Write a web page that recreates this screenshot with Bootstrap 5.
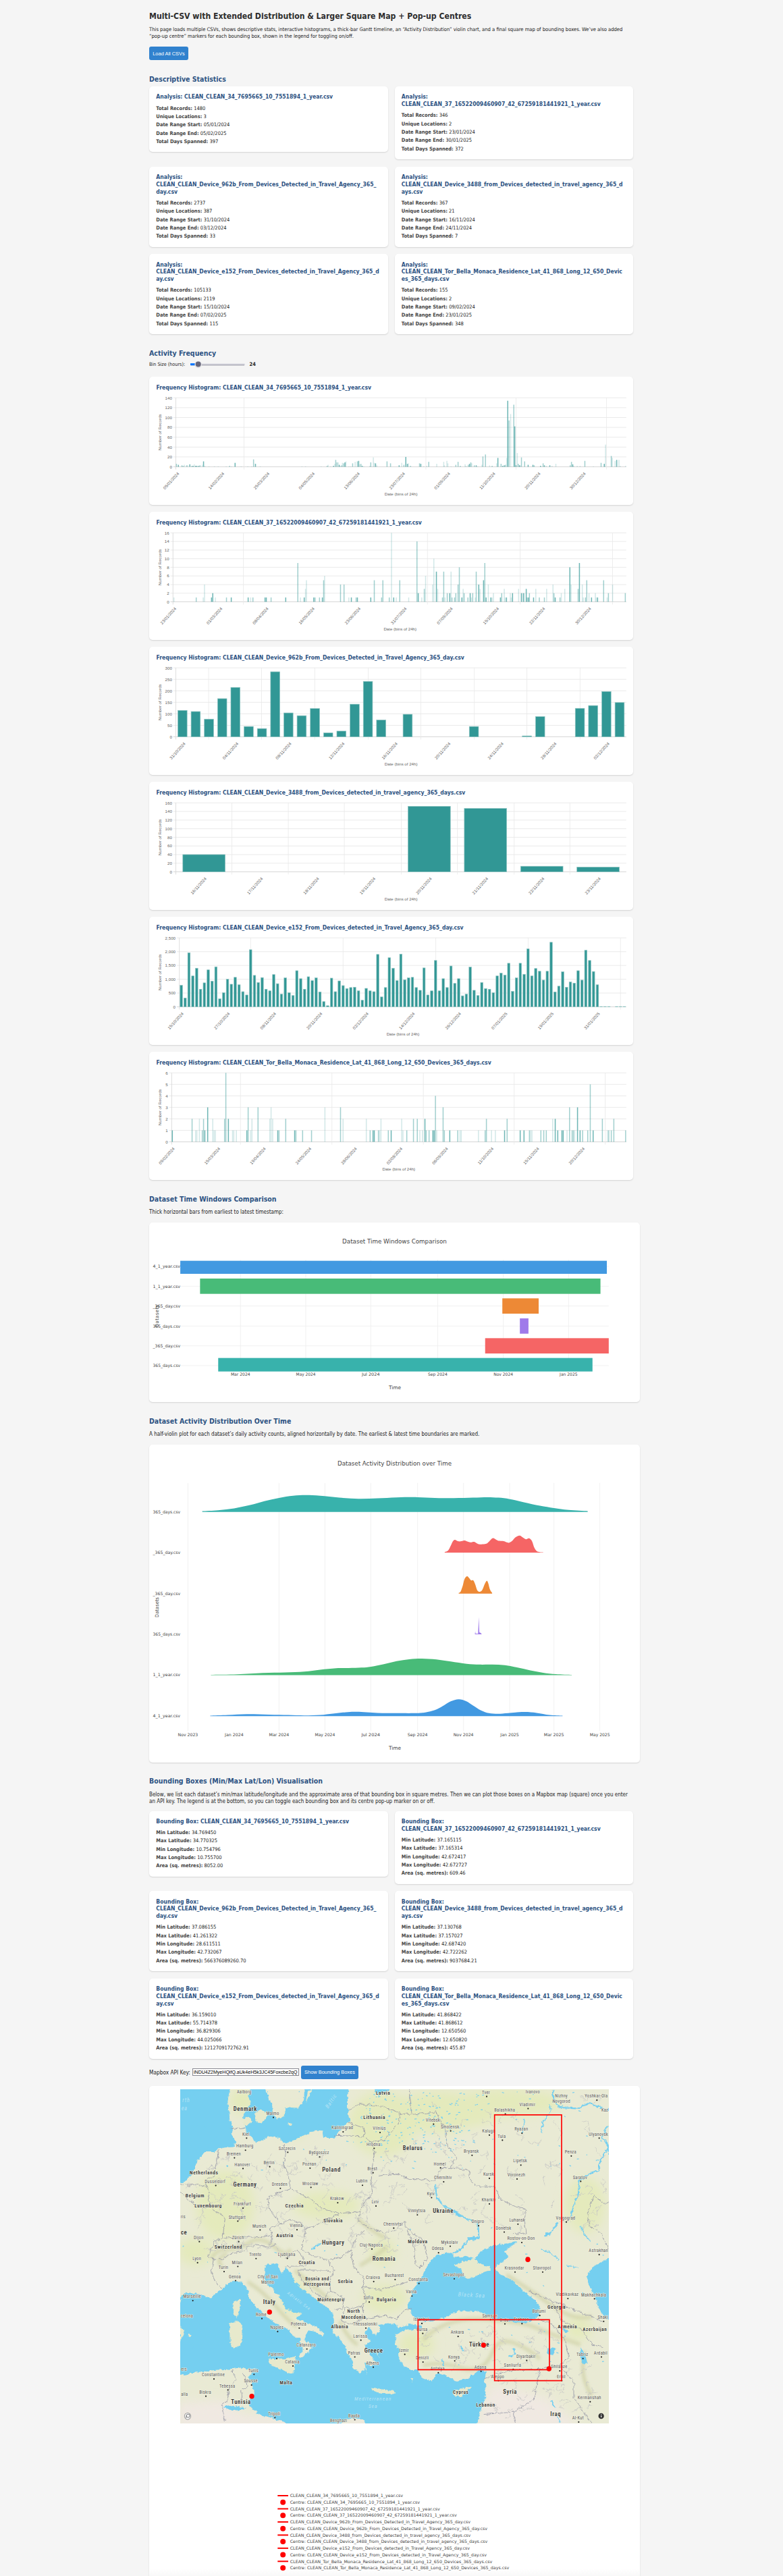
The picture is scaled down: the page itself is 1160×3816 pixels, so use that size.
<!DOCTYPE html>
<html lang="en">
<head>
<meta charset="utf-8">
<meta name="viewport" content="width=device-width, initial-scale=1">
<title>Multi-CSV with Extended Distribution</title>
<link rel="stylesheet" href="https://cdn.jsdelivr.net/npm/bootstrap@5.3.0/dist/css/bootstrap.min.css">
<style>
body{background:#f5f5f5;color:#222;font-family:"DejaVu Sans Condensed","DejaVu Sans",sans-serif;font-stretch:condensed;font-size:7.48px;line-height:10.3px;height:3816px;overflow:hidden}
.page{width:717px;margin-left:221px}
h1{font-size:12.16px;line-height:16px;font-weight:700;color:#2d2d2d;padding-top:16px;margin:0 0 7px}
h2{font-size:10.5px;line-height:14px;font-weight:700;color:#2c5282;margin:0;white-space:nowrap}
h3{font-size:8.55px;line-height:10.8px;font-weight:700;color:#2c5282;margin:0 0 6.5px;overflow-wrap:anywhere}
p{margin:0;white-space:nowrap;font-size:8px}
.intro{font-size:7.58px}
.panel{background:#fff;border-radius:5px;box-shadow:0 1px 2px rgba(0,0,0,.14)}
.stat{padding:10.3px;width:353.5px}
.stat ul{margin:0;padding:0;list-style:none}
.stat li{height:10.3px;margin-bottom:2px;white-space:nowrap}
.stat li:last-child{margin:0}
.stat b{color:#444}
.grid2{display:grid;grid-template-columns:353.5px 353.5px;column-gap:10px;row-gap:10.5px;align-items:start}
.cta{background:#3182ce;border:0;color:#fff;border-radius:3px;font:7.45px "Liberation Sans",Arial,sans-serif;white-space:nowrap;height:20px;padding:0;text-align:center}
.hist{height:190px;margin-bottom:10px;position:relative;padding-top:10.3px}
.hist h3{padding-left:10.5px;margin:0;white-space:nowrap}
.hist svg{position:absolute;left:0;top:0}
.slider{width:82px;height:12px}
.bin-label{width:60.5px;font-size:7.2px}
.key-label{width:64px;font-size:8.25px;white-space:nowrap}
.key{width:158px;height:11.5px;border:1px solid #8a8a92;background:#fff;font:7.05px "Liberation Sans",Arial,sans-serif;line-height:10px;overflow:hidden;white-space:nowrap;color:#000;padding-left:1px}
svg{display:block}
.wide{width:727px}
.map-card{height:740px;margin-top:10px;padding:5px 0 0 46px;background:linear-gradient(#fff 0 715px,#f3f3f3 735px)}
.tick{font:6.2px "Liberation Sans",Arial,sans-serif;fill:#666}
.pl{font-family:"DejaVu Sans",sans-serif;fill:#444}
.mapbox text{font-family:Roboto,"Open Sans",sans-serif;text-anchor:middle;paint-order:stroke;stroke:#f3f3e6;stroke-width:3px;stroke-linejoin:round;fill:#555;letter-spacing:.9px}
.mapbox .land-name{font-weight:600;fill:#333;letter-spacing:1.9px}
.mapbox .sea{fill:#b6e4f6;stroke:none;font-style:italic;letter-spacing:3px}
</style>
<script src="https://cdn.jsdelivr.net/npm/bootstrap@5.3.0/dist/js/bootstrap.bundle.min.js"></script>
</head>
<body>
<main class="page">
<h1>Multi-CSV with Extended Distribution &amp; Larger Square Map + Pop-up Centres</h1>
<p class="intro">This page loads multiple CSVs, shows descriptive stats, interactive histograms, a thick-bar Gantt timeline, an “Activity Distribution” violin chart, and a final square map of bounding boxes. We’ve also added<br>“pop-up centre” markers for each bounding box, shown in the legend for toggling on/off.</p>
<button class="cta d-block" style="width:58px;margin-top:9.5px">Load All CSVs</button>
<h2 style="margin-top:20.5px;margin-bottom:4.5px">Descriptive Statistics</h2>
<section class="grid2" id="stats"></section>
<h2 style="margin-top:21px">Activity Frequency</h2>
<div class="d-flex align-items-center" style="height:20px;margin-bottom:8px"><span class="bin-label">Bin Size (hours):</span>
<svg class="slider" viewBox="0 0 82 12"><rect y="4.2" width="81" height="3" rx="1.5" fill="#dedee5"/><path d="M1 6.8H80" stroke="#8f8f9d" stroke-width="1"/><rect y="4.2" width="8" height="3" fill="#0075ff"/><circle cx="11.7" cy="6" r="5.3" fill="#e3e3e6"/><circle cx="11.7" cy="5.5" r="4" fill="#66667a"/></svg><b style="margin-left:6px">24</b></div>
<section id="hists"></section>
<h2 style="margin-top:20.5px;margin-bottom:8px">Dataset Time Windows Comparison</h2>
<p>Thick horizontal bars from earliest to latest timestamp:</p>
<div class="panel wide" id="gantt" style="height:266.5px;margin-top:9.7px"></div>
<h2 style="margin-top:20.5px;margin-bottom:8px">Dataset Activity Distribution Over Time</h2>
<p>A half-violin plot for each dataset’s daily activity counts, aligned horizontally by date. The earliest &amp; latest time boundaries are marked.</p>
<div class="panel wide" id="violin" style="height:471px;margin-top:9.7px"></div>
<h2 style="margin-top:20.8px;margin-bottom:8.5px">Bounding Boxes (Min/Max Lat/Lon) Visualisation</h2>
<p>Below, we list each dataset’s min/max latitude/longitude and the approximate area of that bounding box in square metres. Then we can plot those boxes on a Mapbox map (square) once you enter<br>an API key. The legend is at the bottom, so you can toggle each bounding box and its centre pop-up marker on or off.</p>
<section class="grid2" id="boxes" style="margin-top:8px"></section>
<div class="d-flex align-items-center" style="margin-top:10px;height:20px"><span class="key-label">Mapbox API Key:</span><div class="key">iNDU4Z2MyeHQifQ.aUk4eH5k3JC45Foxcbe2qQ</div><button class="cta" style="width:85px;margin-left:3px">Show Bounding Boxes</button></div>
<div class="panel wide map-card">
<svg class="mapbox" id="map" width="635" height="495" viewBox="51 102 1905 1437" preserveAspectRatio="none"></svg>
<svg id="legend" width="620" height="224"></svg>
</div>
</main>
<script>
const names=['CLEAN_CLEAN_34_7695665_10_7551894_1_year.csv','CLEAN_CLEAN_37_16522009460907_42_67259181441921_1_year.csv','CLEAN_CLEAN_Device_962b_From_Devices_Detected_in_Travel_Agency_365_day.csv','CLEAN_CLEAN_Device_3488_from_Devices_detected_in_travel_agency_365_days.csv','CLEAN_CLEAN_Device_e152_From_Devices_detected_in_Travel_Agency_365_day.csv','CLEAN_CLEAN_Tor_Bella_Monaca_Residence_Lat_41_868_Long_12_650_Devices_365_days.csv'];
const broken=[0,0,'365_|day','365_d|ays','365_d|ay','Devic|es'];
const cards=(id,title,labels,rows)=>document.getElementById(id).innerHTML=rows.map((r,i)=>{
 let n=names[i];if(broken[i])n=n.replace(broken[i].replace('|',''),broken[i].replace('|','<br>'));
 return `<div class="panel stat"><h3>${title}:${i?'<br>':' '}${n}</h3><ul>${r.map((v,k)=>`<li><b>${labels[k]}:</b> ${v}</li>`).join('')}</ul></div>`}).join('');
cards('stats','Analysis',['Total Records','Unique Locations','Date Range Start','Date Range End','Total Days Spanned'],[
['1480','3','05/01/2024','05/02/2025','397'],['346','2','23/01/2024','30/01/2025','372'],['2737','387','31/10/2024','03/12/2024','33'],['367','21','16/11/2024','24/11/2024','7'],['105133','2119','15/10/2024','07/02/2025','115'],['155','2','09/02/2024','23/01/2025','348']]);
cards('boxes','Bounding Box',['Min Latitude','Max Latitude','Min Longitude','Max Longitude','Area (sq. metres)'],[
['34.769450','34.770325','10.754796','10.755700','8052.00'],['37.165115','37.165314','42.672417','42.672727','609.46'],['37.086155','41.261322','28.611511','42.732067','566376089260.70'],['37.130768','37.157027','42.687420','42.722262','9037684.21'],['36.159010','55.714378','36.829306','44.025066','1212709172762.91'],['41.868422','41.868612','12.650560','12.650820','455.87']]);

const X=v=>+(v/2.119-11).toFixed(2);
const tones=['','rgba(49,151,149,.22)','rgba(49,151,149,.45)','rgba(49,151,149,.7)'];
const T=31.3,B=133.5;
const slots=(l,r,w,vals)=>{const s=(r-l)/vals.length;return vals.map((v,i)=>[l+s*(i+.5),v,3,w]).filter(b=>b[1])};
const parse=s=>s.trim().split(/\s+/).map(t=>{const a=t.split(',').map(Number);return[a[0],a[1],a[2]||1,3.2]});
function hist(i,o){
 let s='';const y=v=>B-(B-T)*v/o.max;
 for(let v=0;v<=o.max;v+=o.step){s+=`<path d="M${X(o.l-8)} ${y(v)}H${X(1521)}" stroke="${v?'#e8e8e8':'#d2d2d2'}" stroke-width=".9"/><text class="tick" text-anchor="end" x="${X(o.l-12)}" y="${y(v)+2.2}">${v.toLocaleString('en-US')}</text>`}
 o.grid.forEach((g,k)=>s+=`<path d="M${X(g)} ${T}V${B+4}" stroke="${k?'#e9e9e9':'#d5d5d5'}" stroke-width=".8"/>`);
 o.bars.forEach(([x,v,t,w])=>{const yy=y(v),solid=w>5;s+=`<rect x="${X(x-w/2)}" y="${yy.toFixed(2)}" width="${(w/2.119).toFixed(2)}" height="${(B-yy).toFixed(2)}" fill="${solid?'#319795':tones[t]}" ${solid?'stroke="#8fc4c2" stroke-width=".7"':''}/>`});
 o.dates.forEach((d,k)=>{const x=X(o.d0+o.dp*k);s+=`<text class="tick" text-anchor="end" transform="translate(${x},144) rotate(-48)" textLength="31.5">${d}</text>`});
 s+=`<text class="tick" text-anchor="middle" x="${X(o.mid||814)}" y="175.5" textLength="48.6">Date (bins of 24h)</text><text class="tick" text-anchor="middle" transform="translate(18.2,82.3) rotate(-90)" textLength="54">Number of Records</text>`;
 return `<div class="panel hist"><h3>Frequency Histogram: ${names[i]}</h3><svg width="717" height="190">${s}</svg></div>`}
const D=s=>s.split(' ');
const charts=[
{l:107,max:140,step:20,grid:[107,321,892,1175,1459],d0:118,dp:141.8,dates:D('05/01/2024 14/02/2024 25/03/2024 04/05/2024 13/06/2024 23/07/2024 01/09/2024 11/10/2024 20/11/2024 30/12/2024'),
bars:parse(`109,6,2 115,4,3 126,3,2 130,2,2 134,4 141,3,2 144,3 151,5,3 157,2,2 161,2,3 165,5 169,2,3 173,2,3 179,2,3 183,3,2 190,4 194,11,3 198,2 211,1 228,1 240,1 265,1 276,2,2 282,1 293,8,3 312,1 333,1 345,1 351,15,2 357,6,3 372,1 503,1 514,1 563,1 582,2,2 585,4 593,1 602,2,3 606,6 609,14,2 613,9,2 617,9 620,4,3 624,2 628,3,2 630,8 634,7,2 638,9,3 641,11 650,1 656,1 662,7,2 670,10 677,11,2 681,12,3 684,5 688,6,2 692,2,3 697,1 716,2 719,9,2 727,19 730,8 734,7,3 738,3 770,11,2 781,7,2 808,3,3 816,8 823,4,2 829,20,3 834,6,3 837,7 844,2,2 872,7,2 876,6,3 885,1 894,2 901,10,2 926,6 948,10 950,3 958,12 961,7 971,1 986,4,2 993,10,2 1000,2,2 1015,5 1018,2 1025,4,2 1029,6,3 1033,9,2 1036,7 1044,3,2 1050,3,3 1055,1 1068,4 1071,21,2 1079,25,2 1092,3 1100,2,2 1114,7 1118,18,3 1128,6,2 1133,2,3 1138,3,3 1142,4,2 1146,18 1149,134,3 1153,94,2 1158,107 1168,126,2 1171,82,3 1175,3,3 1179,28 1182,6,2 1186,3,3 1188,3 1192,19,2 1202,11,2 1213,4,3 1228,4,3 1232,3,2 1252,2,3 1260,7,2 1264,3,3 1270,2 1281,3,3 1288,2 1300,6 1345,3,2 1349,10,2 1353,5,3 1356,2 1367,2 1376,2 1391,12,2 1418,1 1442,8,2 1452,6,3 1456,45,1 1474,22,2 1477,18 1486,12 1491,14,3 1498,14 1502,2 1519,2`)},
{l:98,max:16,step:2,mid:811,grid:[98,319,897,1188,1478],d0:109,dp:144.7,dates:D('23/01/2024 01/03/2024 08/04/2024 16/05/2024 23/06/2024 31/07/2024 07/09/2024 15/10/2024 22/11/2024 30/12/2024'),
bars:parse(`101,1 171,1,2 193,1 197,4 219,1,3 223,2,3 231,1 266,1,2 281,1,3 334,1,3 342,1 349,1,2 387,1,3 391,1,3 406,1,2 452,1,3 490,9,2 498,1 510,1,3 514,3 517,5 540,1,3 544,1,2 558,1,2 567,1,3 571,5,2 574,6,1 624,4,2 635,4,2 650,1 658,1,3 673,1,2 677,1,3 719,1,3 730,5,2 753,1,2 757,5,2 777,1,2 784,16 791,1,3 799,1 810,5,2 838,1 864,14,2 868,2,3 879,1 887,3,2 891,6 913,4 917,10 925,7,3 929,3 944,1,2 948,7,2 952,1 959,2,2 967,2,3 971,7 974,1,2 982,1,2 986,2,2 993,4,2 997,8,2 1005,1,3 1009,3 1012,2,2 1024,1,2 1031,2,3 1035,1 1039,2,2 1047,1 1050,7,2 1058,4,3 1062,3 1073,5,3 1077,9,2 1081,1,3 1088,4 1096,1,3 1100,1 1104,2 1126,1,3 1130,2,2 1138,3 1141,1 1145,1,3 1157,2 1160,1 1164,2,3 1183,3 1192,2,3 1196,2 1199,2,3 1207,3,3 1210,1,2 1214,1,3 1217,2,2 1230,1,3 1237,3 1248,1,2 1264,1,2 1271,3 1291,4 1294,2,2 1298,1,3 1313,1,2 1317,2 1328,3 1344,8,3 1348,4 1370,3,2 1374,9,3 1383,4 1386,1 1393,1,2 1397,5,2 1404,2 1412,1,3 1424,2 1427,1 1431,1,3 1450,5,2 1461,1 1465,2,2 1478,4 1518,2,2`)},
{l:107,max:300,step:50,grid:[107,210,376,543,711,876,1044,1209,1376],d0:138,dp:166.4,dates:D('31/10/2024 04/11/2024 08/11/2024 12/11/2024 16/11/2024 20/11/2024 24/11/2024 28/11/2024 02/12/2024'),
bars:slots(107,1521,29,[115,110,77,166,215,45,36,283,104,92,123,17,25,142,241,73,0,98,0,0,0,0,45,0,0,0,4,88,0,0,124,136,197,149])},
{l:107,max:160,step:20,grid:[107,283,460,636,815,991,1169,1344],d0:204,dp:176.8,dates:D('16/11/2024 17/11/2024 18/11/2024 19/11/2024 20/11/2024 21/11/2024 22/11/2024 23/11/2024'),
bars:slots(107,1521,133,[40,0,0,0,152,147,13,11])},
{l:118,max:2500,step:500,mid:820,grid:[118,342,632,923,1213,1503],d0:132,dp:145.2,dates:D('15/10/2024 27/10/2024 08/11/2024 20/11/2024 02/12/2024 14/12/2024 26/12/2024 07/01/2025 19/01/2025 31/01/2025'),
bars:slots(118,1521,7.6,[780,320,1960,1120,1400,640,870,1340,930,1450,290,510,1000,820,1070,800,550,430,2070,1140,880,1060,640,580,1170,840,460,1050,510,410,1310,1020,640,1090,950,1050,540,190,40,1040,550,940,770,660,700,710,580,240,670,580,550,1900,360,700,1780,1400,950,1910,980,1050,1070,700,600,1410,430,580,1680,580,1020,700,1480,850,1020,400,460,1440,600,410,880,660,640,510,1120,1220,1150,1580,560,1050,1580,1180,2100,1120,1390,1290,970,1290,2340,540,750,1270,710,900,860,1310,970,2050,1680,1280,800,10,10,10,0,10,10,10])},
{l:94,max:6,step:1,mid:807,grid:[94,310,597,884,1169,1455],d0:104,dp:143,dates:D('09/02/2024 15/03/2024 19/04/2024 24/05/2024 28/06/2024 02/08/2024 06/09/2024 11/10/2024 15/11/2024 20/12/2024'),
bars:parse(`96,1,3 158,2,2 169,1 173,1 181,2 190,1,2 194,2,2 198,1,3 207,3,3 223,2 227,1 231,1 260,2,2 264,6,2 272,2,3 285,1 289,1 297,1 330,1,3 334,3,2 342,1 346,2 365,3,2 402,2 406,3 411,2 427,1,3 431,1,2 452,2,2 480,1,3 484,1,2 505,1,2 533,1,2 575,3 624,3,2 632,2 705,2,1 717,1,2 726,1,3 730,1,3 743,1,2 747,1 751,2 774,1,2 783,1,3 816,2,1 820,1 832,1,2 853,2,2 865,2,2 873,1 881,1 889,2,3 893,1,2 902,1,2 914,1,3 918,1,3 922,4,2 926,1 946,3,2 950,1,2 967,1,3 992,1,2 999,1 1003,1 1057,1 1078,1,2 1082,2,2 1098,1 1110,1 1139,1,3 1147,2,2 1188,1,3 1200,1,3 1217,1,2 1221,1 1225,1 1253,1,2 1262,1,2 1270,1,2 1290,2 1298,2,3 1306,1,3 1319,1,3 1323,1,3 1335,1 1343,3,2 1351,1,2 1355,1,2 1359,1 1368,3,3 1376,1,3 1384,1,2 1400,1,2 1408,5,2 1417,1,3 1446,2,2 1462,1 1466,1,2 1474,1,2 1482,2,2 1519,1,2`)}];
document.getElementById('hists').innerHTML=charts.map((c,i)=>hist(i,c)).join('');

const pt=(x,y,t,len,size,extra='')=>`<text class="pl" text-anchor="middle" x="${x}" y="${y}" font-size="${size}" textLength="${len}" lengthAdjust="spacingAndGlyphs" ${extra}>${t}</text>`;
const rowLabels=['4_1_year.csv','1_1_year.csv','_365_day.csv','365_days.csv','_365_day.csv','365_days.csv'];
const colors=['#4299e1','#48bb78','#ed8936','#9f7aea','#f56565','#38b2ac'];
(()=>{const Y=v=>v/3-60;let s=pt(363.5,Y(263)+3.2,'Dataset Time Windows Comparison',154.8,9)+pt(364,Y(914)+2.6,'Time',18,7.4);
[[310,'Mar 2024'],[515,'May 2024'],[719,'Jul 2024'],[929,'Sep 2024'],[1135,'Nov 2024'],[1340,'Jan 2025']].forEach(([x,t])=>s+=`<path d="M${X(x)} ${Y(345)}V${Y(842)}" stroke="#eee" stroke-width=".8"/>`+pt(X(x),Y(855)+2.2,t,t[0]=='J'?26.5:28.8,6.2));
[[375,121,1460],[463,183,1440],[551,1132,1246],[640,1187,1214],[728,1078,1466],[816,240,1415]].forEach(([y,a,b],i)=>{
 let t=i==0?350:y-34,e=i==5?842:i==0?408:y+34;
 s+=`<path d="M${X(121)} ${Y(y)}H${X(1466)}" stroke="#eee" stroke-width=".8"/><rect x="${X(a)}" y="${Y(t)}" width="${(b-a)/2.119}" height="${(e-t)/3}" fill="${colors[i]}"/>`+pt(X(78),Y(y)+2.2,rowLabels[i],40.6,6.2)});
s+=`<text class="pl" text-anchor="middle" font-size="7.2" textLength="33" transform="translate(13.5,138.5) rotate(-90)">Datasets</text>`;
document.getElementById('gantt').innerHTML=`<svg width="727" height="266">${s}</svg>`})();
(()=>{const Y=v=>v/2.9037-49.2;let s=pt(363.5,Y(223)+3.2,'Dataset Activity Distribution over Time',169,9)+pt(364,Y(1447)+2.6,'Time',18,7.4);
[[145,'Nov 2023'],[290,'Jan 2024'],[431,'Mar 2024'],[575,'May 2024'],[719,'Jul 2024'],[866,'Sep 2024'],[1010,'Nov 2024'],[1155,'Jan 2025'],[1294,'Mar 2025'],[1438,'May 2025']].forEach(([x,t])=>s+=(x==290?'':`<path d="M${X(x)} ${Y(308)}V${Y(1374)}" stroke="#eee" stroke-width=".8"/>`)+pt(X(x),Y(1390)+2.2,t,t[0]=='J'?27.5:29.8,6.2));
const v=[[5,431,[190,429,240,425,290,417,340,403,385,386,431,372,475,363,515,360,560,363,620,371,680,376,740,374,800,370,866,369,920,372,980,373,1040,371,1085,369,1120,371,1155,377,1200,391,1250,406,1294,416,1340,424,1400,429]],
[4,606,[951,605,962,598,970,578,976,560,983,552,992,558,1001,559,1013,555,1025,561,1033,563,1044,561,1058,571,1080,570,1090,560,1102,545,1113,552,1122,557,1136,558,1152,565,1163,557,1172,543,1186,534,1197,543,1206,550,1216,546,1225,558,1232,585,1240,601,1250,605,1260,606]],
[2,782,[995,781,1001,775,1008,748,1013,722,1021,709,1028,717,1034,727,1041,727,1047,745,1053,769,1061,776,1069,768,1076,745,1083,729,1088,740,1093,766,1100,781]],
[3,957,[1046,957,1047,946,1048,956,1056,956,1058,885,1060,950,1063,952,1067,957]],
[1,1133,[217,1133,300,1131,380,1125,450,1123,510,1119,560,1111,610,1105,650,1104,690,1102,720,1098,760,1087,800,1074,840,1066,880,1063,925,1067,970,1076,1020,1086,1060,1089,1100,1089,1140,1092,1180,1102,1220,1114,1260,1124,1300,1130,1350,1133]],
[0,1309,[215,1309,270,1306,330,1302,400,1304,460,1306,510,1308,560,1306,600,1300,640,1294,675,1292,740,1297,800,1298,860,1298,890,1295,920,1285,945,1267,970,1247,995,1238,1018,1246,1040,1265,1065,1286,1090,1298,1118,1301,1150,1298,1200,1293,1240,1297,1280,1306,1321,1309]]];
v.forEach(([c,b,p])=>{const q=[];for(let k=0;k<p.length;k+=2)q.push([X(p[k]),Y(p[k+1])]);
 let d=`M${q[0][0]} ${Y(b)+.6}L${q[0]}`;for(let k=0;k<q.length-1;k++){const a=q[k-1]||q[k],m=q[k],n=q[k+1],z=q[k+2]||n,f=c==3?99:6;d+=`C${m[0]+(n[0]-a[0])/f} ${m[1]+(n[1]-a[1])/f} ${n[0]-(z[0]-m[0])/f} ${n[1]-(z[1]-m[1])/f} ${n}`}
 s+=`<path d="${d}V${Y(b)+.6}Z" fill="${colors[c]}"/>`+pt(X(78),Y(b)+2.4,rowLabels[c],40.6,6.2)});
s+=`<text class="pl" text-anchor="middle" font-size="7.2" textLength="30" transform="translate(13.5,241) rotate(-90)">Datasets</text>`;
document.getElementById('violin').innerHTML=`<svg width="727" height="471">${s}</svg>`})();

(()=>{const W='#75cff0',L='#e7e9cc';
const poly=(p,f,o='')=>`<polygon points="${p}" fill="${f}" ${o}/>`;
let s=`<defs><filter id="soft" x="-20%" y="-20%" width="140%" height="140%"><feGaussianBlur stdDeviation="22"/></filter><filter id="soft2"><feGaussianBlur stdDeviation="7"/></filter>
<filter id="coast" x="0" y="0" width="100%" height="100%"><feTurbulence type="fractalNoise" baseFrequency=".06" numOctaves="3" seed="4"/><feDisplacementMap in="SourceGraphic" scale="17" xChannelSelector="R" yChannelSelector="G"/></filter></defs>
<rect x="51" y="102" width="1905" height="1437" fill="#e9ead4"/>`;
s+='<g filter="url(#soft)" fill="#e4eabc">'+[[250,600,130,150],[700,600,150,60],[950,250,150,140],[1200,200,200,90],[1500,160,250,60],[950,800,60,60],[330,150,60,60],[1850,600,90,120],[560,250,60,60],[120,800,80,60],[1350,200,120,60],[960,1000,100,60],[1100,1200,80,60],[1820,1130,60,50],[560,1000,60,80]].map(e=>`<ellipse cx="${e[0]}" cy="${e[1]}" rx="${e[2]}" ry="${e[3]}"/>`).join('')+'</g>';
s+='<g filter="url(#soft)" fill="#f0e9e2">'+poly('40,1450 240,1440 330,1500 560,1520 560,1560 40,1560','#f0e9e2')+poly('1440,1370 1580,1400 1700,1440 1830,1560 1370,1560 1400,1440','#f0e9e2')+'<ellipse cx="840" cy="1545" rx="60" ry="25"/></g>';
s+='<g filter="url(#soft2)" fill="none" stroke="#cfd0a5" stroke-width="15" opacity=".75"><path d="M190 830Q210 790 260 790T360 760T470 780T540 790M240 870Q200 830 260 810M350 930Q420 970 480 1040T570 1120M840 660Q900 710 960 740M850 860Q920 820 970 780M560 880Q640 950 720 1010M760 1100Q800 1180 840 1200M1500 900Q1600 960 1700 1030T1880 1080M1130 1180Q1230 1080 1400 1090T1640 1130T1830 1200M1130 1290Q1200 1270 1300 1300T1440 1230T1650 1260M1850 1230Q1820 1330 1880 1420"/></g>';
s+='<g filter="url(#coast)">';
s+=[ '40,90 275,90 266,130 262,160 268,200 272,240 285,270 280,300 300,330 290,350 262,352 220,355 205,372 160,372 140,395 125,410 118,440 100,470 70,500 40,510',
'365,90 430,90 440,135 460,170 462,205 480,232 515,215 520,180 575,182 600,150 605,90 800,90 795,140 795,180 802,240 770,270 735,312 690,310 685,280 650,278 600,300 560,320 520,335 490,310 450,305 420,320 385,330 375,310 345,290 340,260 330,220 345,190 365,160 355,130',
'905,90 925,120 975,112 990,90',
'40,1020 62,985 90,975 145,985 185,1000 235,965 262,938 295,925 325,935 350,960 358,1000 385,1035 415,1060 445,1090 480,1110 515,1125 535,1140 555,1165 580,1170 590,1200 600,1225 575,1250 580,1262 600,1250 635,1215 630,1195 605,1180 605,1155 625,1140 655,1145 680,1168 688,1150 660,1125 600,1100 565,1085 590,1065 560,1060 520,1045 490,990 460,960 430,935 425,880 435,860 480,850 490,870 500,895 520,870 545,895 560,930 610,975 660,1010 700,1040 730,1065 735,1110 730,1150 765,1180 785,1215 800,1245 815,1260 820,1300 850,1325 870,1300 880,1330 870,1275 905,1290 925,1285 890,1235 870,1200 900,1190 870,1150 890,1125 920,1160 940,1135 930,1115 985,1110 1015,1112 1020,1150 1010,1160 1005,1195 1030,1230 1020,1250 1040,1290 1075,1310 1110,1310 1125,1345 1170,1355 1195,1320 1240,1335 1280,1357 1330,1345 1380,1310 1410,1315 1405,1350 1410,1400 1400,1450 1380,1500 1367,1560 880,1560 870,1528 825,1515 780,1525 740,1560 550,1560 510,1530 440,1510 400,1500 380,1480 360,1465 345,1450 365,1430 380,1400 375,1375 355,1345 370,1320 385,1300 360,1310 330,1298 270,1305 200,1310 120,1320 40,1335',
'1000,1145 1040,1120 1075,1113 1120,1118 1130,1130 1085,1138 1050,1135 1010,1158',
'1075,1010 1085,960 1110,930 1135,890 1155,850 1190,815 1240,805 1280,825 1320,818 1360,832 1385,800 1440,775 1545,758 1520,780 1490,800 1510,820 1485,845 1460,860 1450,875 1480,900 1530,925 1580,975 1630,1010 1650,1040 1640,1080 1590,1105 1550,1108 1490,1095 1440,1090 1410,1070 1370,1055 1290,1055 1230,1080 1170,1100 1120,1100 1085,1075 1055,1030',
'1970,820 1910,850 1880,870 1855,910 1870,950 1895,1000 1920,1060 1970,1110',
'1830,1210 1850,1245 1860,1280 1845,1285 1825,1245','1685,1215 1720,1215 1705,1245 1680,1240','1745,1120 1775,1140 1765,1150'].map(p=>poly(p,W)).join('');
s+=['1270,860 1320,840 1355,830 1375,850 1430,866 1430,880 1390,890 1360,910 1330,918 1310,905 1300,875','328,228 355,220 372,240 350,258 332,250','385,200 410,190 440,200 430,235 410,250 385,235','530,245 548,250 545,262 530,256','608,160 618,110 645,95 625,125','288,1015 316,1005 318,1040 302,1085 285,1060','270,1110 310,1095 328,1125 322,1200 290,1218 272,1190','441,1262 480,1258 520,1262 565,1250 550,1325 505,1310 445,1280','900,1386 945,1395 1008,1400 1005,1410 940,1408 905,1398','1260,1405 1290,1390 1350,1380 1320,1405 1300,1425 1270,1420','80,1155 102,1160 90,1168','51,1125 72,1140 51,1190','925,1235 905,1215 940,1260','1010,1160 1040,1155 1025,1175','1010,1205 1020,1210 1010,1218','1075,1345 1090,1340 1078,1360','60,1000 51,1010 51,1020'].map(p=>poly(p,L)).join('');
s+='</g>';
const rnd=(()=>{let a=7;return()=>(a=(a*16807)%2147483647)/2147483647})();
let dots='';for(let i=0;i<330;i++){const r=rnd(),x=r<.6?850+rnd()*520:60+rnd()*1880,y=r<.6?115+rnd()*260:(r<.85?110+rnd()*350:700+rnd()*600);dots+=`M${x.toFixed()} ${y.toFixed()}l${(2+rnd()*8).toFixed()} ${(rnd()*8-4).toFixed()}`}
s+=`<path d="${dots}" stroke="${W}" stroke-width="3.5" fill="none"/>`;
s+=`<g filter="url(#coast)" fill="none" stroke="${W}"><path stroke-width="6" d="M1185 510L1190 560L1215 600L1260 620L1290 645L1340 665L1375 680L1378 735L1330 750L1300 790L1260 812M1670 735L1700 715L1730 675"/><path stroke-width="12" d="M1265 625L1295 648M1330 745L1378 740M1672 730L1700 720"/><path stroke-width="6" d="M1705 105L1712 145L1735 180L1820 185L1870 160L1930 185L1956 190M1950 260L1925 310L1955 350L1920 400L1910 450L1865 470L1825 495L1820 560L1800 600L1785 650M1945 320L1956 380"/><path stroke-width="4" d="M1655 790L1700 810L1735 835M1830 690L1850 730L1880 760M1580 230L1570 290M1770 860L1820 870M1655 290L1665 240L1700 190L1690 170"/><path stroke-width="6" d="M635 788L675 765M1210 1260L1225 1290M1295 1205L1310 1225M1530 1215L1540 1240L1510 1250M1700 1440L1715 1470M1725 1505L1740 1535"/></g>`;
s+=`<path filter="url(#coast)" d="M245 1468L270 1460L300 1466L345 1470L325 1478L285 1485L265 1476Z" fill="${W}"/>`;
const bl=d=>`<path d="${d}"/>`;
s+='<g filter="url(#coast)" fill="none" stroke="#9a9ba8" stroke-width="2.6">'+['M275 270L320 272L340 268','M220 360L215 410L205 440L210 470L170 490L165 520L180 545L175 575L195 620L240 645L250 660L240 740L270 740L330 735L400 740L450 730','M51 510L90 515L120 510L160 520M51 540L90 580L125 600L180 605M240 740L205 755L175 820L200 830L240 835L270 810L330 800L345 780L390 770L450 780L480 770M200 830L190 880L205 930L235 960','M510 335L520 380L510 420L530 470L545 530L490 545L440 570L445 610L470 650L500 680L450 700L460 730L450 770','M545 530L600 560L625 570L660 600L700 620L760 635L850 630','M500 680L540 660L590 680L610 700L650 690L700 660L760 640','M610 700L600 740L590 790L640 820L705 835L770 825L810 790L840 730L870 710','M850 630L845 670L880 695L960 720L1010 705L1050 670L1050 690','M850 630L870 590L905 550L900 500L905 430L915 370L900 330L865 305L735 300M865 305L870 270L800 245M800 190L850 165L950 175L1030 205L1020 250L980 290L960 320L900 330','M930 475L1010 465L1070 490L1140 490L1180 495L1210 440L1250 440L1280 390L1240 350L1230 280L1190 200L1080 210L1020 210M1080 205L1070 140L1070 102','M1250 440L1330 450L1345 500L1370 520L1450 520L1470 570L1520 600L1590 620L1580 660L1590 720L1530 725','M1050 690L1080 720L1130 750L1150 830L1115 870L1095 850L1090 780L1060 710','M705 835L735 880L715 930L720 970L700 990L690 1020M575 880L700 880L720 890M575 880L590 920L640 970L690 1000','M720 970L780 1000L770 1045L740 1050M780 1045L860 1035L870 1090L810 1110L770 1100L780 1045M860 1040L880 1010L860 950L940 965L1060 930','M810 790L820 860L870 920L860 950M870 1090L960 1075L1010 1090L1050 1050L1080 1045','M520 830L570 790L600 830L610 860L520 865','M330 1320L350 1380L320 1400L325 1450','M280 1310L300 1350L270 1390L260 1440L235 1460L250 1530','M1400 1350L1440 1330L1530 1310L1650 1305L1740 1290M1650 1305L1630 1400L1620 1440L1530 1490L1400 1500M1530 1490L1540 1539M1740 1290L1800 1360L1800 1430L1850 1500L1880 1539','M1640 1090L1700 1110L1760 1180L1780 1250L1740 1290M1600 970L1700 1010L1800 1050L1880 1080L1930 1100M1700 1010L1750 1100L1830 1130L1880 1200L1930 1210','M1870 690L1860 640L1890 560L1930 590L1956 590M1870 690L1920 720L1956 790'].map(bl).join('')+'</g>';
let adm='';for(let i=0;i<170;i++){const x=[80+rnd()*500,600+rnd()*500,1150+rnd()*780][i%3],y=i%3==0?400+rnd()*400:(i%3==1?350+rnd()*450:130+rnd()*560);let px=x,py=y;adm+=`M${x.toFixed()} ${y.toFixed()}`;for(let k=0;k<4;k++){px+=rnd()*50-22;py+=rnd()*50-22;adm+=`L${px.toFixed()} ${py.toFixed()}`}}
for(let i=0;i<80;i++){let px=i%2?1110+rnd()*600:1430+rnd()*430,py=i%2?1120+rnd()*150:1290+rnd()*200;adm+=`M${px.toFixed()} ${py.toFixed()}`;for(let k=0;k<3;k++){px+=rnd()*50-22;py+=rnd()*40-20;adm+=`L${px.toFixed()} ${py.toFixed()}`}}
s+=`<path filter="url(#coast)" d="${adm}" fill="none" stroke="#c3c4c4" stroke-width="2"/>`;
const city=(str,dx)=>str.split(';').map(t=>{const[n,x,y]=t.split(',');return`<text x="${+x+dx}" y="${+y+6}" font-size="19.5">${n}</text><circle cx="${+x+dx+3}" cy="${+y+17}" r="3.2" fill="#222"/>`}).join('');
s+=city('Malmo,462,206;Kiel,343,295;Kaliningrad,772,268;Vilnius,936,271;Hamburg,338,347;Bremen,289,380;Hanover,327,426;Berlin,446,418;Szczecin,526,356;Bydgoszcz,668,376;Poznan,625,424;Hrodna,910,339;Brest,905,444;Lublin,858,498;Dusseldorf,206,499;Dresden,493,511;Wroclaw,629,507;Krakow,748,573;Lviv,918,587;Frankfurt,327,596;Stuttgart,304,652;Munich,403,690;Vienna,567,689;Dijon,133,740;Zürich,308,740;Chernivtsi,997,682;Cluj-Napoca,900,772;Lyon,125,831;Trento,385,813;Ljubljana,524,812;Milan,304,847;Turin,243,869;Genoa,294,908;Craiova,908,912;Bucharest,1003,903;Marseille,104,994;Sofia,888,1000;Rome,411,1071;Naples,481,1127;Potenza,577,1112;Thessaloniki,873,1112;Larissa,851,1164;Catanzaro,611,1202;Patras,824,1236;Athens,906,1280;Palermo,477,1243;Catania,549,1275;Tunis,376,1311;Constantine,198,1331;Sousse,365,1357;Tebessa,260,1378;Biskra,162,1405;Tripoli,469,1497;Bayda,824,1506',0);
s+=city('Tver,420,116;Yoshkar-Ola,910,132;Vladimir,604,168;Balashikha,503,191;Vitebsk,184,235;Smolensk,260,264;Kaluga,432,282;Ryazan,577,274;Tula,490,304;Ulyanovsk,920,295;Bryansk,355,369;Penza,796,372;Homel,215,423;Lipetsk,572,411;Kursk,432,468;Voronezh,555,471;Chernihiv,229,483;Saratov,838,481;Kyiv,175,551;Kharkiv,432,578;Vinnytsia,112,625;Dnipro,384,672;Luhansk,559,665;Volgograd,774,656;Donetsk,498,699;Rostov-on-Don,576,744;Mykolaiv,258,760;Odesa,206,788;Astrakhan,920,796;Krasnodar,546,871;Stavropol,669,871;Sevastopol,276,900;Constanta,119,920;Varna,88,974;Vladikavkaz,781,985;Makhachkala,899,986;Batumi,656,1058;Samsun,437,1076;Ordu,501,1094;Trabzon,577,1093;Shaki,940,1083;Istanbul,132,1092;Bursa,136,1135;Ankara,293,1148;Izmir,56,1225;Denizli,137,1258;Konya,278,1253;Diyarbakir,598,1251;Tabriz,848,1243;Ardabil,930,1236;Adana,395,1298;Antalya,205,1304;Sanliurfa,538,1289;Ghilanze,745,1296;Aleppo,472,1338;Erbil,754,1338;Kermanshah,880,1429;Al-Kut,829,1516',990);
s+=[['Nizhny',1745,131],['Novgorod',1745,154],['City of San',440,910],['Marino',440,932],['celona',81,1076],['Kaz',1938,191],['ris',64,651],['ers',68,1308],['alla',70,1414],['Aalborg',335,112],['Ivanovo',1618,112],['Benghazi',755,1527]].map(t=>`<text x="${t[1]}" y="${t[2]+6}" font-size="19">${t[0]}</text>`).join('');
s+=[['Denmark',340,187,26],['Latvia',953,117,22],['Lithuania',914,223,22],['Netherlands',157,461,22],['Germany',339,513,26],['Poland',723,449,26],['Belgium',117,559,22],['Luxembourg',176,601,21],['Czechia',559,602,22],['Slovakia',731,666,21],['Austria',516,731,22],['Switzerland',265,778,22],['Hungary',731,762,26],['Croatia',614,845,21],['Romania',957,832,26],['Serbia',785,926,22],['Bosnia and',660,916,20],['Herzegovina',660,940,20],['Montenegro',721,1005,21],['Bulgaria',968,1006,22],['Italy',447,1018,27],['North',822,1056,21],['Macedonia',822,1081,21],['Albania',760,1122,21],['Greece',911,1225,26],['Malta',522,1363,21],['Tunisia',321,1447,26],['ce',68,718,26],['Belarus',1085,356,25],['Ukraine',1220,626,26],['Moldova',1107,756,22],['Georgia',1724,1038,22],['Armenia',1772,1123,22],['Azerbaijan',1894,1132,21],['Türkiye',1380,1201,26],['Cyprus',1298,1404,21],['Syria',1517,1404,26],['Lebanon',1409,1459,21],['Iraq',1720,1499,26]].map(t=>`<text class="land-name" x="${t[1]}" y="${t[2]+8}" font-size="${t[3]}">${t[0]}</text>`).join('');
s+=[['rth',78,150,24,0],['ea',70,184,24,0],['Baltic',728,150,24,-55],['Adriatic Sea',575,1010,19,36],['Mediterranean',908,1432,23,0],['Sea',908,1466,23,0],['Black Sea',1346,988,25,3]].map(t=>`<text class="sea" transform="translate(${t[1]},${t[2]+7}) rotate(${t[4]})" font-size="${t[3]}">${t[0]}</text>`).join('');
s+='<g fill="none" stroke="#f00" stroke-width="5"><rect x="1448" y="212" width="298" height="1143"/><rect x="1108" y="1093" width="584" height="215"/></g><g fill="#f00">'+[[448,1060],[369,1422],[1596,834],[1399,1202],[1690,1304]].map(c=>`<circle cx="${c[0]}" cy="${c[1]}" r="11"/>`).join('')+'</g>';
s+='<circle cx="84" cy="1508" r="14" fill="#fff" stroke="#999" stroke-width="3"/><circle cx="86" cy="1506" r="7" fill="none" stroke="#888" stroke-width="3"/><path d="M77 1516L78 1504" stroke="#888" stroke-width="3"/><circle cx="1922" cy="1507" r="12.5" fill="#333"/><path d="M1922 1505v8M1922 1499v3" stroke="#eee" stroke-width="4"/>';
document.getElementById('map').innerHTML=s})();
(()=>{let s='';const w=[502,666,802,803,799,899].map(v=>v/3);
names.forEach((n,i)=>{const y=107+i*19.46;s+=`<path d="M144.3 ${y}h15.7" stroke="#f00" stroke-width="2"/><circle cx="152.2" cy="${y+9.73}" r="4" fill="#f00"/><g class="pl" font-size="6.2"><text x="162.7" y="${y+2.3}" textLength="${w[i]}" lengthAdjust="spacingAndGlyphs">${n}</text><text x="162.7" y="${y+12}" textLength="${w[i]+25}" lengthAdjust="spacingAndGlyphs">Centre: ${n}</text></g>`});
document.getElementById('legend').innerHTML=s})();
</script>
</body>
</html>
